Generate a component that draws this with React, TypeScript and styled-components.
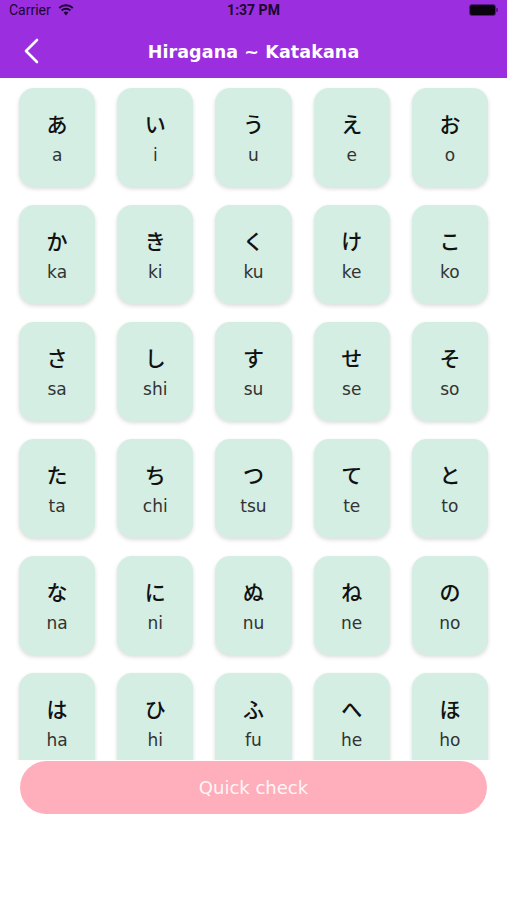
import React from 'react';
import styled, { createGlobalStyle } from 'styled-components';

const GlobalStyle = createGlobalStyle`
  html, body {
    margin: 0;
    padding: 0;
    background: #ffffff;
  }
  body {
    font-family: "DejaVu Sans", "Noto Sans", sans-serif;
  }
`;

const Screen = styled.div`
  width: 507px;
  height: 900px;
  display: flex;
  flex-direction: column;
  background: #ffffff;
  overflow: hidden;
`;

const Header = styled.div`
  background: #9b2fe0;
  display: flex;
  flex-direction: column;
`;

const StatusBar = styled.div`
  height: 20px;
  display: grid;
  grid-template-columns: 1fr auto 1fr;
  align-items: center;
  padding: 0 9px;
  font-family: Roboto, "Liberation Sans", sans-serif;
  font-size: 14px;
  color: #1c0430;
`;

const Carrier = styled.div`
  display: flex;
  align-items: center;
  gap: 7px;
`;

const Clock = styled.div`
  font-weight: 700;
  font-style: normal;
`;

const Battery = styled.div`
  justify-self: end;
  display: flex;
  align-items: center;
`;

const BatteryBody = styled.div`
  width: 25px;
  height: 10px;
  border-radius: 3px;
  background: #0a0410;
  border: 1px solid #5a1a86;
`;

const BatteryNub = styled.div`
  width: 2px;
  height: 4px;
  border-radius: 0 1px 1px 0;
  background: #5a1a86;
`;

const NavBar = styled.div`
  height: 58px;
  display: flex;
  align-items: center;
  justify-content: center;
  position: relative;
  padding-top: 6px;
  box-sizing: border-box;
`;

const BackButton = styled.button`
  position: absolute;
  left: 22px;
  top: 18px;
  background: none;
  border: none;
  padding: 0;
  display: flex;
`;

const Title = styled.div`
  color: #ffffff;
  font-family: "DejaVu Sans", sans-serif;
  font-weight: bold;
  font-size: 17.5px;
  letter-spacing: 0.1px;
`;

const ScrollArea = styled.div`
  height: 682px;
  overflow: hidden;
`;

const Grid = styled.div`
  display: grid;
  grid-template-columns: repeat(5, 1fr);
  column-gap: 22px;
  row-gap: 18px;
  padding: 10px 19px 20px 19px;
`;

const Card = styled.div`
  height: 99px;
  border-radius: 15px;
  background: #d4eee3;
  box-shadow: 0 2px 4px rgba(0, 0, 0, 0.14);
  display: flex;
  flex-direction: column;
  align-items: center;
  justify-content: center;
  gap: 8px;
`;

const Kana = styled.div`
  font-family: "Noto Sans CJK JP", sans-serif;
  font-weight: 500;
  font-size: 21px;
  line-height: 26px;
  color: #111111;
`;

const Romaji = styled.div`
  font-family: "DejaVu Sans", sans-serif;
  font-size: 17px;
  line-height: 22px;
  color: #333333;
`;

const Footer = styled.div`
  padding: 1px 20px 0 20px;
`;

const QuickCheck = styled.button`
  width: 100%;
  height: 53px;
  border: none;
  border-radius: 27px;
  background: #ffafbc;
  color: rgba(255, 255, 255, 0.9);
  font-family: "DejaVu Sans", sans-serif;
  font-size: 18px;
`;

const rows: [string, string][][] = [
  [['あ', 'a'], ['い', 'i'], ['う', 'u'], ['え', 'e'], ['お', 'o']],
  [['か', 'ka'], ['き', 'ki'], ['く', 'ku'], ['け', 'ke'], ['こ', 'ko']],
  [['さ', 'sa'], ['し', 'shi'], ['す', 'su'], ['せ', 'se'], ['そ', 'so']],
  [['た', 'ta'], ['ち', 'chi'], ['つ', 'tsu'], ['て', 'te'], ['と', 'to']],
  [['な', 'na'], ['に', 'ni'], ['ぬ', 'nu'], ['ね', 'ne'], ['の', 'no']],
  [['は', 'ha'], ['ひ', 'hi'], ['ふ', 'fu'], ['へ', 'he'], ['ほ', 'ho']],
];

function WifiIcon() {
  return (
    <svg width="16" height="12" viewBox="0 0 16 12">
      <path d="M8 11.5 L5.6 8.6 A3.6 3.6 0 0 1 10.4 8.6 Z" fill="#1c0430" />
      <path d="M3.6 6.6 A6.4 6.4 0 0 1 12.4 6.6" stroke="#1c0430" strokeWidth="2" fill="none" />
      <path d="M1.2 4 A10 10 0 0 1 14.8 4" stroke="#1c0430" strokeWidth="2" fill="none" />
    </svg>
  );
}

export default function App() {
  return (
    <Screen>
      <GlobalStyle />
      <Header>
        <StatusBar>
          <Carrier>
            Carrier
            <WifiIcon />
          </Carrier>
          <Clock>1:37 PM</Clock>
          <Battery>
            <BatteryBody />
            <BatteryNub />
          </Battery>
        </StatusBar>
        <NavBar>
          <BackButton>
            <svg width="18" height="26" viewBox="0 0 18 26">
              <path d="M15 2 L4 13 L15 24" stroke="#ffffff" strokeWidth="2.6" fill="none" strokeLinecap="round" strokeLinejoin="round" />
            </svg>
          </BackButton>
          <Title>Hiragana ~ Katakana</Title>
        </NavBar>
      </Header>
      <ScrollArea>
        <Grid>
          {rows.flat().map(([kana, romaji]) => (
            <Card key={kana}>
              <Kana>{kana}</Kana>
              <Romaji>{romaji}</Romaji>
            </Card>
          ))}
        </Grid>
      </ScrollArea>
      <Footer>
        <QuickCheck>Quick check</QuickCheck>
      </Footer>
    </Screen>
  );
}
